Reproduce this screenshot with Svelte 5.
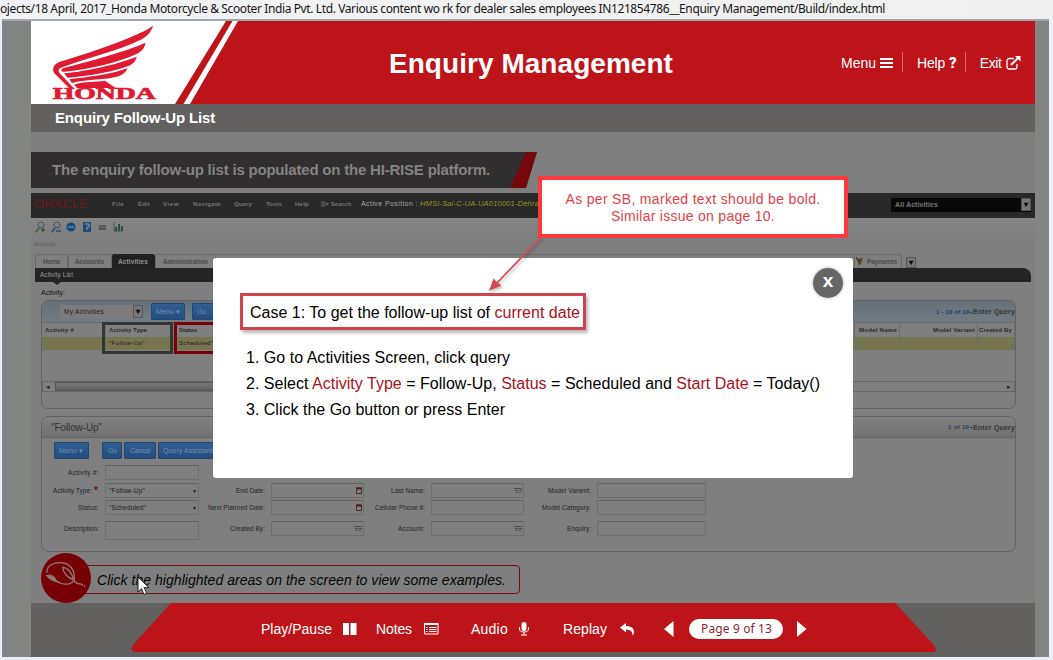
<script>
  function fit(node, width) {
    const natural = node.getBoundingClientRect().width;
    const count = node.textContent.length;
    if (count && natural) node.style.letterSpacing = `${(width - natural) / count}px`;
  }
  const menus = [['File', 12], ['Edit', 12], ['View', 16], ['Navigate', 28], ['Query', 18], ['Tools', 16], ['Help', 14]];
  const rows = [
    [['Activity #:', 31, ''], null, null, null],
    [['Activity Type:', 39, '"Follow-Up"', 36], ['End Date:', 29, 'cal'], ['Last Name:', 34, 'pick'], ['Model Varient:', 43, '']],
    [['Status:', 21, '"Scheduled"', 37], ['Next Planned Date:', 57, 'cal'], ['Cellular Phone #:', 50, ''], ['Model Category:', 49, '']],
    [['Description:', 35, ''], ['Created By:', 35, 'pick'], ['Account:', 27, 'pick'], ['Enquiry:', 24, '']]
  ];
</script>

{#snippet t(text, width, cls = '')}<span class="t {cls}" use:fit={width}>{text}</span>{/snippet}

<div class="window">
  <div class="address">{@render t('ojects/18 April, 2017_Honda Motorcycle & Scooter India Pvt. Ltd. Various content wo rk for dealer sales employees IN121854786__Enquiry Management/Build/index.html', 885)}</div>
  <div class="viewport">
    <main>
      <header>
        <svg class="slant" width="210" height="83" viewBox="0 0 210 83">
          <path fill="#fff" d="M0 0H195L144 83H0Z" />
          <path fill="#fff" d="M201.500 0H207L159 83H152.500Z" />
        </svg>
        <svg class="wing" width="106" height="80" viewBox="18 10 318 240">
          <g fill="#df1b32">
            <path d="M324 15C296 39 150 92 45 123C25 130 20 145 28 158L72 202H86L44 158Q36 147 48 141C130 111 220 91 290 56C308 45 320 32 324 15Z" />
            <path d="M301 66C250 90 130 123 56 142C48 145 47 149 52 153H60C140 144 220 125 276 99C292 91 300 80 301 66Z" />
            <path d="M275 108C220 130 130 151 57 158L68 171C130 166 200 155 250 136C265 130 273 120 275 108Z" />
            <path d="M247 143C200 161 130 169 73 176L81 187C130 174 180 180 220 167C235 162 245 152 247 143Z" />
            <path d="M87 192C120 181 150 185 180 180L212 202H96Z" />
          </g>
          <text x="23" y="236" textLength="309" lengthAdjust="spacingAndGlyphs">HONDA</text>
        </svg>
        <h1>{@render t('Enquiry Management', 284)}</h1>
        <nav>
          <div class="nav-item">{@render t('Menu', 35)}<svg width="13" height="12"><path d="M0 2H13M0 6H13M0 10H13" stroke="#fff" stroke-width="2" /></svg></div>
          <i></i>
          <div class="nav-item">{@render t('Help', 28)}<b>?</b></div>
          <i></i>
          <div class="nav-item">{@render t('Exit', 22)}<svg width="15" height="14" viewBox="0 0 15 14"><path d="M8 2.500H3.500Q1 2.500 1 5V10.500Q1 13 3.500 13H9Q11 13 11 10.500V8" fill="none" stroke="#fff" stroke-width="1.300" /><path d="M5 9L12 2" stroke="#fff" stroke-width="2" /><path d="M9 0H14.500V5.500Z" fill="#fff" /></svg></div>
        </nav>
      </header>

      <div class="subtitle">{@render t('Enquiry Follow-Up List', 160)}</div>
      <div class="lead">{@render t('The enquiry follow-up list is populated on the HI-RISE platform.', 438)}<svg width="27" height="36"><path d="M16 0H27L16 36H0Z" fill="#76070b" /></svg></div>

      <section class="oracle">
        <div class="brand">{@render t('ORACLE', 54)}</div>
        {#each menus as [label, width]}<div>{@render t(label, width)}</div>{/each}
        <div class="search">⚿▾ {@render t('Search', 21)}</div>
        <div class="position">{@render t('Active Position :', 57)}</div>
        <div class="place">{@render t('HMSI-Sal-C-UA-UA010001-Dehra', 119)}</div>
        <div class="all">{@render t('All Activities', 43)}<span class="drop">▾</span></div>
      </section>

      <div class="tools">
        <svg width="92" height="14" viewBox="0 0 92 14" fill="none">
          <circle cx="6" cy="5" r="3" stroke="#405460" /><path d="M4 8L1 12M6 10H10M8 8V12" stroke="#38583c" stroke-width="1.500" />
          <circle cx="22" cy="5" r="3" stroke="#405460" /><path d="M20 8L17 12M21 11H26" stroke="#234f75" stroke-width="1.500" />
          <circle cx="36" cy="7" r="4.500" fill="#174b7b" /><path d="M33 7H39" stroke="#527795" stroke-width="2" />
          <rect x="48" y="2" width="8" height="10" fill="#204e79" /><path d="M50 4H54V7H52V10" stroke="#8ba0b0" />
          <rect x="64" y="5" width="7" height="5" fill="#555" /><path d="M65 7H70" stroke="#777" />
          <path d="M79 2V11H88" stroke="#445b61" /><path d="M81 7V11M84 4V11M87 6V11" stroke="#28523a" stroke-width="2" />
        </svg>
      </div>
      <div class="crumb">{@render t('Activity:', 24)}</div>
      <div class="tabs">
        <div>{@render t('Home', 17)}</div><div>{@render t('Accounts', 29)}</div><div class="active">{@render t('Activities', 30)}</div><div>{@render t('Administration', 45)}</div>
        <div class="hidden-tabs"></div>
        <div class="payments"><svg width="9" height="9" viewBox="0 0 9 9"><path d="M1 2L5 1L8 4L5 8Z" fill="#66512d" /><path d="M1 0L4 4L8 1M4 4V8" stroke="#30281f" fill="none" /></svg>{@render t('Payments', 30)}</div><span class="drop">▾</span>
      </div>
      <div class="list-bar">{@render t('Activity List', 33)}</div>
      <div class="view-label">{@render t('Activity:', 24)}</div>

      <section class="panel records">
        <div class="panel-head">
          <div class="select">{@render t('My Activities', 40)}<span class="drop">▾</span></div>
          <div class="btn">{@render t('Menu ▾', 24)}</div>
          <div class="btn go">{@render t('Go', 9)}</div>
          <div class="query">{@render t('1 - 10 of 10+', 37, 'count')}{@render t('Enter Query', 42)}</div>
        </div>
        <div class="columns head"><div>{@render t('Activity #', 29)}</div><div>{@render t('Activity Type', 38)}</div><div>{@render t('Status', 18)}</div><div></div><div>{@render t('Model Name', 38)}</div><div>{@render t('Model Variant', 42)}</div><div>{@render t('Created By', 33)}</div></div>
        <div class="columns row"><div></div><div>{@render t('"Follow-Up"', 36)}</div><div>{@render t('Scheduled"', 34)}</div><div></div><div></div><div></div><div></div></div>
        <div class="mark grey"></div><div class="mark red"></div>
        <div class="scroll"><span>◂</span><i></i><span>▸</span></div>
      </section>

      <section class="panel details">
        <div class="panel-head"><div class="title">{@render t('"Follow-Up"', 51)}</div><div class="query">{@render t('1 of 10+', 25, 'count')}{@render t('Enter Query', 42)}</div></div>
        <div class="buttons"><div class="btn">{@render t('Menu ▾', 24)}</div><div class="btn">{@render t('Go', 9)}</div><div class="btn">{@render t('Cancel', 20)}</div><div class="btn">{@render t('Query Assistant', 50)}</div></div>
        <div class="form">
          {#each rows as row, r}
            {#each row as cell, c}
              <div class="label">{#if cell}{@render t(cell[0], cell[1])}{#if r === 1 && c === 0}<b>*</b>{/if}{/if}</div>
              {#if cell}
                <div class="field" class:tall={r === 3 && c === 0}>
                  {#if c === 0}{#if cell[2]}{@render t(cell[2], cell[3])}<em>▼</em>{/if}
                  {:else if cell[2] === 'cal'}<svg width="6" height="7" viewBox="0 0 6 7"><path d="M.5 1H5.500V6.500H.5Z" fill="none" stroke="#48282a" /><path d="M0 1.500H6" stroke="#551b20" stroke-width="2" /></svg>
                  {:else if cell[2] === 'pick'}<svg width="8" height="6" viewBox="0 0 8 6"><path d="M0 .5H8M1 2.500H4M5 2.500H8M2 4.500H4M5 4.500H7" stroke="#4a4a4a" /></svg>{/if}
                </div>
              {:else}<div></div>{/if}
            {/each}
          {/each}
        </div>
      </section>

      <div class="hint">
        <div class="badge"><svg width="50" height="50" viewBox="0 0 150 150" fill="none" stroke="#8e7777" stroke-width="4" stroke-linecap="round"><path d="M18 58C16 38 38 29 58 29C88 29 102 54 100 76C96 97 66 99 43 82C35 73 27 72 18 67" /><path d="M18 68Q36 62 47 86Q28 82 18 68Z" fill="#8e7777" /><path d="M65 43C65 58 82 77 98 80C93 60 79 43 65 43ZM98 79C105 99 116 88 125 96M131 98V100" /></svg></div>
        <div class="hint-box">{@render t('Click the highlighted areas on the screen to view some examples.', 409)}</div>
      </div>

      <footer>
        <svg class="shape" width="1004" height="53"><path d="M140 0H864L903 42Q906 46 904 49H103Q99 46 102 42Z" fill="#bd141a" /></svg>
        <div class="controls">
          <div>{@render t('Play/Pause', 71)}</div><svg width="14" height="13"><path d="M0 0H6V12H0ZM7.500 0H13.500V12H7.500Z" fill="#fff" /></svg>
          <div>{@render t('Notes', 36)}</div><svg width="15" height="12"><path d="M.5 .5H14V11H.5Z" fill="none" stroke="#fff" /><path d="M0 1H14.500" stroke="#fff" stroke-width="2" /><path d="M2 4.500H3.500M5 4.500H12.500M2 6.500H3.500M5 6.500H12.500M2 8.500H3.500M5 8.500H12.500" stroke="#fff" /></svg>
          <div>{@render t('Audio', 37)}</div><svg width="10" height="14"><rect x="2.500" y="0" width="5" height="9" rx="2.500" fill="#fff" /><path d="M.5 5V7Q.5 10 5 10Q9.500 10 9.500 7V5M5 10V13M2 13H8" fill="none" stroke="#fff" /></svg>
          <div>{@render t('Replay', 44)}</div><svg width="15" height="13"><path d="M0 4.500L6 0V3Q14 3 14 9Q14 11 12.500 12.500Q13 6.500 6 6.500V9.500Z" fill="#fff" /></svg>
          <svg class="prev" width="10" height="16"><path d="M0 8L9.500 0V16Z" fill="#fff" /></svg>
          <div class="page">{@render t('Page 9 of 13', 71)}</div>
          <svg width="10" height="16"><path d="M9.500 8L0 0V16Z" fill="#fff" /></svg>
        </div>
      </footer>
    </main>
  </div>

  <div class="dialog">
    <button aria-label="Close">x</button>
    <div class="case"><span class="t" use:fit={330}>Case 1: To get the follow-up list of <span class="key">current date</span></span></div>
    <div class="steps">
      <div><span class="t" use:fit={264}>1. Go to Activities Screen, click query</span></div>
      <div><span class="t" use:fit={574}>2. Select <span class="key">Activity Type</span> = Follow-Up, <span class="key">Status</span> = Scheduled and <span class="key">Start Date</span> = Today()</span></div>
      <div><span class="t" use:fit={259}>3. Click the Go button or press Enter</span></div>
    </div>
  </div>
  <svg class="arrow" width="64" height="64" viewBox="0 0 64 64"><path d="M56 2L12 48" stroke="#d84850" stroke-width="1.800" /><path d="M4 56L8.500 43.500L12 47L16.500 50.500Z" fill="#d84850" /></svg>
  <div class="note"><div>{@render t('As per SB, marked text should be bold.', 255)}</div><div>{@render t('Similar issue on page 10.', 164)}</div></div>
  <svg class="cursor" width="13" height="20" viewBox="0 0 13 20"><path d="M1 1V16L4.500 12.700L7 18.500L9.700 17.300L7.200 11.700H12Z" fill="#fff" stroke="#222" /></svg>
</div>

<style>
  :global(body) { margin: 0; overflow: hidden; }
  * { box-sizing: border-box; }
  .window { width: 1053px; height: 660px; position: relative; background: #e9eef8; font-family: "Liberation Sans", Arial, sans-serif; overflow: hidden; }
  .t { display: inline-block; white-space: pre; flex: none; }
  .address { height: 19px; background: linear-gradient(90deg, #f2f3f6, #efefef); color: #151515; font: 12px/18px "Noto Sans", sans-serif; }
  .viewport { height: 638px; width: 1047px; margin-left: 2px; background: #838583; border-top: 2px solid #a0a7b0; padding-left: 29px; }
  main { width: 1004px; height: 636px; background: #7f7f7f; display: flex; flex-direction: column; }
  header { height: 83px; background: #bd141a; position: relative; display: flex; color: #fff; flex: none; }
  .slant { position: absolute; left: 0; top: 0; }
  .wing { position: relative; margin: 3px 0 0 20px; flex: none; }
  .wing text { font: bold 47px "Liberation Serif", serif; fill: #df1b32; stroke: #df1b32; stroke-width: 2px; }
  h1 { margin: 0 0 0 232px; width: 452px; font-size: 28px; line-height: 85px; }
  nav { display: flex; font-size: 14px; align-items: flex-start; padding-top: 32px; }
  .nav-item { display: flex; height: 20px; line-height: 20px; gap: 4px; align-items: center; }
  .nav-item b { font: 900 15px Roboto, sans-serif; }
  nav i { height: 20px; width: 1px; background: #d96a6d; margin: -1px 14px 0 9px; }
  nav i:last-of-type { margin-left: 8px; }
  .subtitle { height: 28px; flex: none; background: #636060; color: #fff; font: bold 15px/28px "Liberation Sans", sans-serif; padding-left: 24px; }
  .lead { height: 36px; flex: none; margin-top: 20px; width: 506px; padding-left: 21px; font: bold 15px/36px "Liberation Sans", sans-serif; color: #858384; background: #302e2f; clip-path: polygon(0 0, 506px 0, 495px 100%, 0 100%); display: flex; justify-content: space-between; }
  .oracle { height: 25px; flex: none; margin-top: 5px; background: #282828; color: #777; display: grid; grid-template-columns: 81px 26px 25px 30px 41px 32px 29px 26px 40px 59px 471px 140px; line-height: 22px; font-size: 6px; font-weight: bold; white-space: nowrap; overflow: hidden; }
  .brand { color: #711717; font-size: 13px; padding-left: 3px; font-weight: normal; }
  .position { color: #aaa; font-weight: normal; font-size: 7px; }
  .place { color: #9b972c; font-style: italic; font-weight: normal; font-size: 7.500px; }
  .all { height: 14px; line-height: 14px; margin-top: 5px; background: #080808; display: flex; justify-content: space-between; padding-left: 4px; font-size: 7px; }
  .drop { width: 10px; height: 13px; line-height: 12px; background: #777; border: 1px solid #555; color: #080808; text-align: center; font-size: 8px; font-weight: bold; }
  .tools { height: 21px; flex: none; padding: 2px 4px; background: linear-gradient(#848484, #7f7f7f); }
  .crumb { height: 15px; line-height: 11px; flex: none; padding-left: 3px; font-size: 6px; color: #565656; }
  .tabs { height: 14px; flex: none; display: flex; margin-left: 4px; font-size: 6.500px; font-weight: bold; color: #4b4b4b; }
  .tabs > div { border: 1px solid #696969; border-bottom: 0; border-radius: 2px 3px 0 0; height: 14px; line-height: 13px; padding: 0 7px; }
  .tabs > div:nth-child(1) { width: 33px; }
  .tabs > div:nth-child(2) { width: 44px; padding: 0 6px; }
  .tabs > .active { width: 43px; background: #202020; color: #929292; border-color: #202020; padding: 0 5px; }
  .tabs > .hidden-tabs { width: 638px; border: 0; border-top: 1px solid #696969; }
  .tabs > .payments { display: flex; align-items: center; gap: 3px; padding: 0; width: 48px; }
  .tabs .drop { margin: 3px 0 0 4px; height: 11px; line-height: 9px; }
  .list-bar { height: 14px; width: 996px; margin-left: 4px; flex: none; background: #242424; color: #999; font-size: 6.500px; line-height: 13px; border-radius: 0 8px 0 0; padding-left: 5px; position: relative; }
  .list-bar::after { content: ""; position: absolute; left: 18px; top: 14px; border: 4px solid transparent; border-top: 3px solid #242424; }
  .view-label { height: 18px; flex: none; line-height: 21px; padding-left: 10px; font-size: 7px; color: #111; }
  .panel { width: 975px; margin-left: 10px; flex: none; border: 1px solid #626262; border-radius: 7px; position: relative; overflow: hidden; }
  .panel-head { height: 21px; display: flex; align-items: center; position: relative; }
  .records { height: 109px; }
  .records .panel-head { background: linear-gradient(#667078, #737c83); padding-left: 18px; }
  .query { margin-left: auto; display: flex; align-items: center; font-size: 7px; font-weight: bold; color: #343434; }
  .query :global(.count) { color: #173c60; font-size: 6px; }
  .select { width: 83px; height: 14px; background: #7c7c7c; display: flex; align-items: center; padding-left: 4px; justify-content: space-between; font-size: 6.500px; color: #222; }
  .btn { background: linear-gradient(#315f91, #234d80); color: #7490ac; border: 1px solid #25466c; border-radius: 1px; height: 17px; line-height: 15px; font-size: 7px; padding-left: 4px; white-space: nowrap; overflow: hidden; }
  .records .btn { width: 34px; margin-left: 8px; }
  .records .btn.go { width: 30px; margin-left: 7px; }
  .columns { display: grid; grid-template-columns: 64px 70px 65px 614px 45px 78px 37px; font-size: 6px; }
  .columns > div { white-space: nowrap; padding-left: 3px; border-right: 1px solid #6d6d6d; }
  .columns > div:nth-child(n + 5) { padding: 0 2px 0 0; text-align: right; }
  .head { height: 15px; line-height: 14px; font-weight: bold; color: #292929; border-top: 1px solid #696969; }
  .row { height: 13px; line-height: 12px; background: #777450; color: #171717; }
  .mark { position: absolute; top: 21px; height: 32px; width: 71px; left: 60px; border: 3px solid #343434; }
  .mark.red { left: 132px; border-color: #790006; }
  .scroll { margin-top: 31px; height: 11px; border: 1px solid #686868; display: flex; align-items: center; justify-content: space-between; font-size: 7px; color: #222; padding: 0 3px; }
  .scroll i { height: 9px; width: 740px; background: linear-gradient(#797979, #606060); border: 1px solid #555; margin-right: auto; margin-left: 5px; }
  .details { height: 136px; margin-top: 7px; }
  .details .panel-head { background: linear-gradient(#818181, #717171); border-bottom: 1px solid #656565; }
  .title { padding-left: 9px; font-size: 10px; color: #343434; }
  .buttons { display: flex; margin: 4px 0 0 12px; height: 17px; }
  .buttons .btn { width: 35px; }
  .buttons .btn:nth-child(2) { width: 20px; margin-left: 13px; padding-left: 5px; }
  .buttons .btn:nth-child(3) { width: 32px; margin-left: 2px; padding-left: 5px; }
  .buttons .btn:nth-child(4) { width: 60px; margin-left: 2px; }
  .form { display: grid; grid-template-columns: 63px 94px 72px 93px 67px 93px 73px 109px; grid-template-rows: 18px 17px 21px 20px; margin-top: 6px; font-size: 6.500px; color: #222; }
  .label { text-align: right; line-height: 15px; padding-right: 6px; white-space: nowrap; position: relative; }
  .label:nth-child(9) { padding-right: 13px; }
  .label b { position: absolute; right: 7px; top: 1px; color: #750d12; font-size: 10px; line-height: 13px; }
  .field { height: 15px; border: 1px solid #6e6e6e; border-top-color: #626262; display: flex; align-items: center; padding: 0 1px 0 3px; color: #191919; }
  .field.tall { height: 19px; }
  .field svg { margin-left: auto; }
  .field em { font-style: normal; font-size: 5px; margin-left: auto; }
  .hint { height: 51px; flex: none; display: flex; padding: 1px 0 0 10px; }
  .badge { width: 50px; height: 50px; border-radius: 50%; background: #760006; z-index: 1; flex: none; }
  .hint-box { width: 445px; height: 29px; line-height: 28px; border: 1px solid #760b13; border-radius: 4px; margin: 12px 0 0 -16px; padding-left: 21px; font-size: 14px; font-style: italic; color: #050505; }
  footer { flex: 1; background: #636060; position: relative; color: #fff; }
  .shape { position: absolute; inset: 0; }
  .controls { position: relative; display: grid; grid-template-columns: 82px 33px 48px 47px 48px 44px 57px 44px 25px 108px 12px; height: 52px; padding-left: 230px; align-items: center; font-size: 14px; }
  .page { width: 94px; height: 20px; line-height: 20px; color: #941f32; background: #fff; border-radius: 10px; padding-left: 12px; font-family: "Noto Sans", sans-serif; font-size: 12px; }
  .dialog { position: absolute; left: 213px; top: 258px; width: 640px; height: 220px; background: #fff; border-radius: 3px; padding: 35px 27px; font-size: 16px; color: #000; }
  .dialog button { position: absolute; top: 10px; left: 600px; width: 30px; height: 30px; border-radius: 50%; background: #666; border: 0; color: #fff; font: bold 19px/24px "Liberation Sans", sans-serif; padding: 0 0 4px; box-shadow: 0 0 0 2px #e9e9e9; }
  .case { width: 346px; height: 37px; line-height: 34px; border: 3px solid #cf444e; padding-left: 7px; box-shadow: 2px 3px 3px #b9b9b9; }
  .key { color: #aa1119; }
  .steps { margin-top: 15px; padding-left: 6px; line-height: 26px; }
  .note { position: absolute; left: 538px; top: 176px; width: 310px; height: 62px; border: 4px solid #fc3a3d; background: #fff; text-align: center; color: #e34147; font-size: 14px; line-height: 17px; padding-top: 11px; }
  .arrow { position: absolute; left: 485px; top: 235px; filter: drop-shadow(2px 2px 1px #0003); }
  .cursor { position: absolute; left: 137px; top: 576px; }
</style>
